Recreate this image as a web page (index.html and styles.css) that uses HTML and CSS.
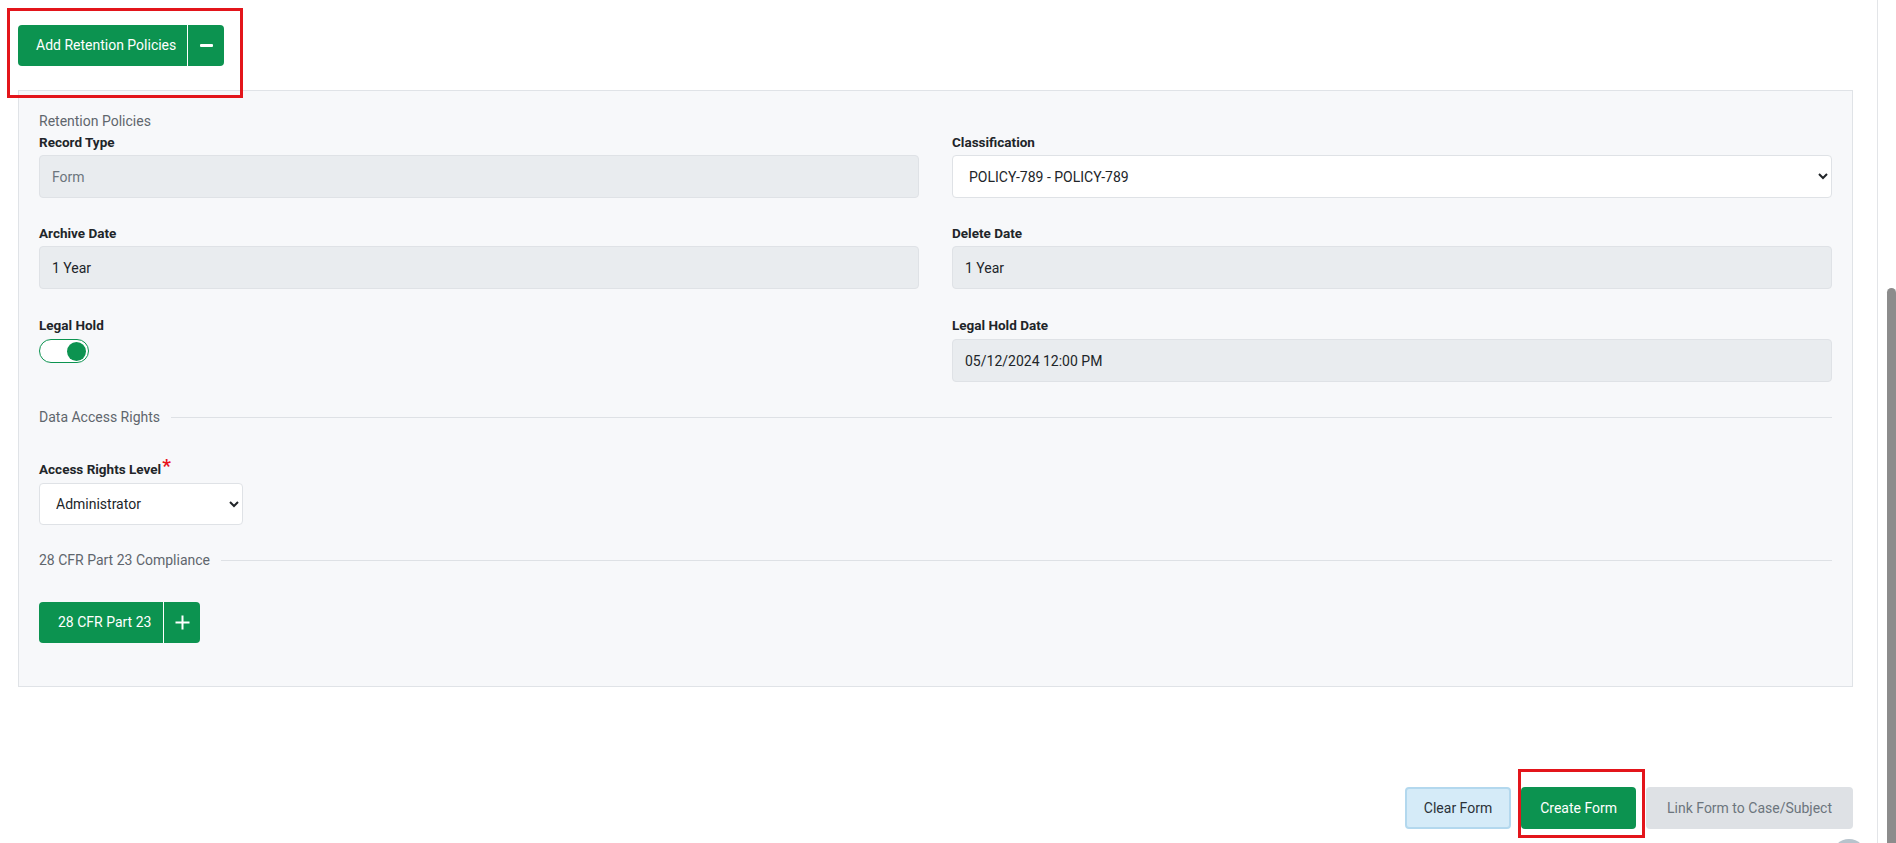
FILE: index.html
```html
<!DOCTYPE html>
<html lang="en">
<head>
<meta charset="utf-8">
<title>Retention Policies</title>
<link rel="stylesheet" href="styles.css">
</head>
<body>
<div class="page">
  <main class="main">
    <div class="top-action">
      <div class="split-btn">
        <span class="split-label">Add Retention Policies</span>
        <span class="split-icon">
          <svg width="13" height="3" viewBox="0 0 13 3"><rect x="0" y="0" width="13" height="3" rx="1" fill="#fff"/></svg>
        </span>
      </div>
      <span class="annot annot-top"></span>
    </div>

    <section class="panel">
      <div class="section-title">Retention Policies</div>
      <div class="grid">
        <div class="field">
          <label class="label">Record Type</label>
          <input class="control readonly" type="text" placeholder="Form" disabled>
        </div>
        <div class="field">
          <label class="label">Classification</label>
          <select class="control select">
            <option>POLICY-789 - POLICY-789</option>
          </select>
        </div>
        <div class="field">
          <label class="label">Archive Date</label>
          <input class="control readonly" type="text" value="1 Year" disabled>
        </div>
        <div class="field">
          <label class="label">Delete Date</label>
          <input class="control readonly" type="text" value="1 Year" disabled>
        </div>
        <div class="field field-row3">
          <label class="label">Legal Hold</label>
          <span class="toggle"><span class="knob"></span></span>
        </div>
        <div class="field field-row3">
          <label class="label">Legal Hold Date</label>
          <input class="control readonly" type="text" value="05/12/2024 12:00 PM" disabled>
        </div>
      </div>

      <div class="divider-title dt-access">Data Access Rights</div>

      <div class="field field-access">
        <label class="label">Access Rights Level<span class="req">*</span></label>
        <select class="control select select-small">
          <option>Administrator</option>
        </select>
      </div>

      <div class="divider-title dt-cfr">28 CFR Part 23 Compliance</div>

      <div class="split-btn split-cfr">
        <span class="split-label">28 CFR Part 23</span>
        <span class="split-icon">
          <svg width="15" height="15" viewBox="0 0 15 15"><path d="M7.5 0.5v14M0.5 7.5h14" stroke="#fff" stroke-width="2" fill="none"/></svg>
        </span>
      </div>
    </section>

    <div class="actions">
      <button class="btn btn-clear" type="button">Clear Form</button>
      <div class="btn-wrap">
        <button class="btn btn-create" type="button">Create Form</button>
        <span class="annot annot-bottom"></span>
      </div>
      <button class="btn btn-link" type="button">Link Form to Case/Subject</button>
    </div>
  </main>
  <div class="scrollbar"><div class="thumb"></div></div>
</div>
<span class="float-circle"></span>
</body>
</html>
```
FILE: styles.css
```css
* { box-sizing: border-box; }

html, body {
  margin: 0;
  padding: 0;
  height: 100%;
  overflow: hidden;
  background: #ffffff;
}

body {
  font-family: Roboto, "Noto Sans", "Liberation Sans", sans-serif;
  font-size: 14px;
  color: #212529;
}

.page {
  display: flex;
  height: 843px;
}

.main {
  flex: 1;
  border-right: 1px solid #e3e5e8;
  padding: 25px 24px 0 18px;
}

.top-action {
  position: relative;
  display: inline-block;
  vertical-align: top;
}

.split-btn {
  display: inline-flex;
  align-items: stretch;
  height: 41px;
  background: #0c9350;
  border-radius: 4px;
  color: #ffffff;
  line-height: 41px;
}

.split-label {
  padding: 0 11px 0 18px;
  border-right: 1px solid #ffffff;
}

.split-icon {
  width: 36px;
  display: flex;
  align-items: center;
  justify-content: center;
}

.annot {
  position: absolute;
  border: 3px solid #e3151b;
  pointer-events: none;
}

.annot-top {
  left: -11px;
  top: -17px;
  width: 236px;
  height: 90px;
}

.panel {
  margin-top: 24px;
  background: #f7f8fa;
  border: 1px solid #e0e3e7;
  padding: 20px 20px 43px 20px;
}

.section-title {
  line-height: 20px;
  color: #5f666d;
  margin-bottom: 1px;
}

.grid {
  display: grid;
  grid-template-columns: 1fr 1fr;
  column-gap: 33px;
  row-gap: 25px;
}

.field {
  display: flex;
  flex-direction: column;
  align-items: flex-start;
}

.field-row3 {
  margin-top: 1px;
}

.field-row3 .label {
  margin-bottom: 4px;
}

.label {
  font-weight: 700;
  font-size: 13.5px;
  line-height: 20px;
  margin-bottom: 3px;
  color: #212529;
}

.control {
  width: 100%;
  height: 43px;
  border: 1px solid #dfe2e6;
  border-radius: 4px;
  font-family: inherit;
  font-size: 14px;
  color: #212529;
  padding: 0 12px;
  margin: 0;
}

.readonly {
  background: #e9ecef;
}

.readonly:disabled {
  color: #212529;
  -webkit-text-fill-color: #212529;
  opacity: 1;
}

.readonly::placeholder {
  color: #6c757d;
  -webkit-text-fill-color: #6c757d;
  opacity: 1;
}

.select {
  background-color: #ffffff;
  padding-left: 12px;
  padding-right: 8px;
}

.toggle {
  width: 50px;
  height: 24px;
  border: 1.5px solid #0c9350;
  border-radius: 12px;
  background: #ffffff;
  display: flex;
  align-items: center;
  justify-content: flex-end;
  padding-right: 2px;
}

.knob {
  width: 19px;
  height: 19px;
  border-radius: 50%;
  background: #0c9350;
}

.divider-title {
  display: flex;
  align-items: center;
  line-height: 20px;
  color: #5f666d;
}

.divider-title::after {
  content: "";
  flex: 1;
  border-top: 1px solid #dee1e5;
  margin-left: 11px;
}

.dt-access {
  margin-top: 25px;
}

.field-access {
  margin-top: 32px;
}

.field-access .label {
  margin-bottom: 4px;
}

.req {
  color: #e8141c;
  font-size: 19px;
  font-weight: 700;
  line-height: 14px;
  vertical-align: top;
  margin-left: 1px;
}

.select-small {
  width: 204px;
  height: 42px;
}

.dt-cfr {
  margin-top: 25px;
}

.split-cfr {
  margin-top: 32px;
}

.split-cfr .split-label {
  padding: 0 12px 0 19px;
}

.actions {
  margin-top: 100px;
  display: flex;
  justify-content: flex-end;
  gap: 10px;
}

.btn-wrap {
  position: relative;
  display: flex;
}

.btn {
  height: 42px;
  padding: 0 18px;
  border-radius: 4px;
  font-family: inherit;
  font-size: 14px;
  border: 1px solid transparent;
  cursor: pointer;
}

.btn-clear {
  background: #d5ebf8;
  border: 2px solid #b3d8ee;
  color: #2b3238;
  padding: 0 17px;
}

.btn-create {
  background: #0c9350;
  color: #ffffff;
}

.btn-link {
  background: #dee1e5;
  color: #6c757d;
  padding: 0 20px;
}

.annot-bottom {
  left: -3px;
  top: -18px;
  width: 127px;
  height: 69px;
}

.scrollbar {
  width: 18px;
  background: #ffffff;
  padding-top: 288px;
  padding-left: 9px;
}

.thumb {
  width: 9px;
  height: 100%;
  background: #8c8c8c;
  border-radius: 5px 5px 0 0;
}

.float-circle {
  position: fixed;
  left: 1832px;
  top: 839px;
  width: 34px;
  height: 34px;
  border-radius: 50%;
  background: #b7c3cc;
}
```
